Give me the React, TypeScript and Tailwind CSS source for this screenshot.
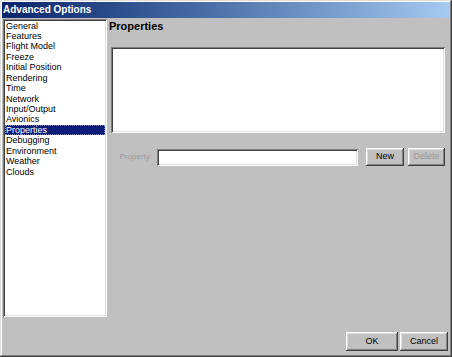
import React from 'react'

const items = [
  'General',
  'Features',
  'Flight Model',
  'Freeze',
  'Initial Position',
  'Rendering',
  'Time',
  'Network',
  'Input/Output',
  'Avionics',
  'Properties',
  'Debugging',
  'Environment',
  'Weather',
  'Clouds',
]

const raised =
  'bg-[#c0c0c0] shadow-[inset_-1px_-1px_0_#404040,inset_1px_1px_0_#ffffff,inset_-2px_-2px_0_#808080,inset_2px_2px_0_#dfdfdf]'
const sunken =
  'bg-white shadow-[inset_1px_1px_0_#808080,inset_-1px_-1px_0_#ffffff,inset_2px_2px_0_#404040,inset_-2px_-2px_0_#dfdfdf]'

function Button({ label, width, disabled }: { label: string; width: string; disabled?: boolean }) {
  return (
    <div
      className={`${raised} ${width} h-full flex items-center justify-center text-[9px] ${
        disabled ? 'text-[#9a9a9a]' : 'text-black'
      }`}
    >
      {label}
    </div>
  )
}

export default function App() {
  const selected = 'Properties'

  return (
    <div className="w-[452px] h-[357px] bg-[#c0c0c0] p-[2px] flex flex-col font-['Liberation_Sans',Arial,sans-serif] shadow-[inset_-1px_-1px_0_#404040,inset_1px_1px_0_#dfdfdf,inset_-2px_-2px_0_#808080,inset_2px_2px_0_#ffffff] select-none">
      {/* title bar */}
      <div className="h-[16px] bg-gradient-to-r from-[#0a246a] to-[#a6caf0] flex items-center pl-[1px] text-white text-[10px] font-bold leading-none">
        Advanced Options
      </div>

      <div className="mt-[1px] h-[298px] flex">
        {/* section list */}
        <div className={`${sunken} ml-[1px] w-[104px] h-full pt-[1.5px] px-[2px]`}>
          {items.map((item) => (
            <div
              key={item}
              className={`h-[10.45px] leading-[10.45px] text-[9px] pl-[1px] whitespace-nowrap ${
                item === selected
                  ? 'bg-[#0c1c78] text-white outline outline-1 outline-dotted outline-[#7f86b8] -outline-offset-1'
                  : 'text-black'
              }`}
            >
              {item}
            </div>
          ))}
        </div>

        {/* properties page */}
        <div className="ml-[4px] w-[335px] flex flex-col">
          <div className="h-[14px] leading-[14px] text-[11px] font-bold text-black -ml-[2px]">Properties</div>
          <div className={`${sunken} mt-[14px] h-[86px] w-[334px]`} />
          <div className="mt-[15px] h-[18px] flex items-center">
            <div className="w-[46px] pr-[5px] text-right text-[8px] text-[#9a9a9a]">Property:</div>
            <div className={`${sunken} w-[201px] h-[17px]`} />
            <div className="ml-[8px] h-full flex">
              <Button label="New" width="w-[38px]" />
            </div>
            <div className="ml-[4px] h-full flex">
              <Button label="Delete" width="w-[37px]" disabled />
            </div>
          </div>
        </div>
      </div>

      {/* footer */}
      <div className="flex-1 flex justify-end items-start pt-[15px] pr-[2px]">
        <div className="h-[19px] flex gap-[2px]">
          <Button label="OK" width="w-[52px]" />
          <Button label="Cancel" width="w-[48px]" />
        </div>
      </div>
    </div>
  )
}
